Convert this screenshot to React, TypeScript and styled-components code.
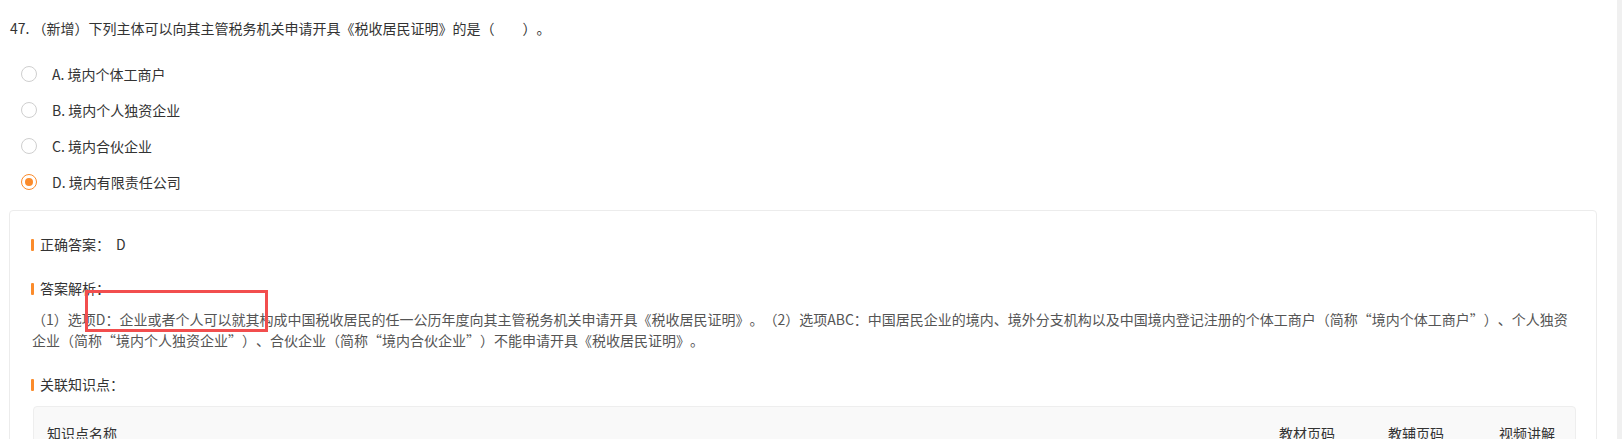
import styled, { createGlobalStyle } from "styled-components";

const GlobalStyle = createGlobalStyle`
  html, body {
    margin: 0;
    padding: 0;
    background: #ffffff;
  }
  body {
    font-family: "Noto Sans CJK SC", "Noto Sans", sans-serif;
    font-size: 14px;
    color: #333333;
    overflow: hidden;
    text-spacing-trim: space-all;
  }
`;

const ORANGE = "#fb8b2b";

const Layout = styled.div`
  display: flex;
  width: 1622px;
  height: 439px;
  overflow: hidden;
`;

const Main = styled.div`
  position: relative;
  flex: 1;
  padding: 18px 20px 0 9px;
`;

const SideStrip = styled.div`
  width: 5px;
  background: #f0f0f0;
`;

const Question = styled.div`
  line-height: 21px;
  padding-left: 1px;
  margin-bottom: 17px;
  white-space: pre;
`;

const Options = styled.div`
  display: flex;
  flex-direction: column;
  margin-bottom: 10px;
`;

const Option = styled.label`
  display: flex;
  align-items: center;
  height: 36px;
  padding-left: 12px;
  line-height: 21px;
  cursor: pointer;
`;

const Radio = styled.span<{ $checked?: boolean }>`
  box-sizing: border-box;
  width: 16px;
  height: 16px;
  border-radius: 50%;
  border: 1px solid ${(p) => (p.$checked ? ORANGE : "#cfcfcf")};
  margin-right: 15px;
  display: flex;
  align-items: center;
  justify-content: center;
  &::after {
    content: "";
    width: 8px;
    height: 8px;
    border-radius: 50%;
    background: ${ORANGE};
    display: ${(p) => (p.$checked ? "block" : "none")};
  }
`;

const Card = styled.div`
  box-sizing: border-box;
  border: 1px solid #ececec;
  border-radius: 4px;
  padding: 23px 20px 0 21px;
  height: 400px;
`;

const Section = styled.div`
  margin-bottom: 23px;
`;

const Title = styled.div<{ $gap?: number }>`
  display: flex;
  align-items: center;
  line-height: 21px;
  margin-bottom: ${(p) => p.$gap ?? 0}px;
  &::before {
    content: "";
    width: 3px;
    height: 12px;
    background: ${ORANGE};
    border-radius: 1px;
    margin-right: 6px;
  }
`;

const AnswerValue = styled.span`
  margin-left: 6px;
`;

const Analysis = styled.p`
  margin: 0;
  padding-left: 1px;
  line-height: 21px;
  color: #555555;
`;

const Table = styled.div`
  margin-left: 2px;
  border: 1px solid #eeeeee;
  border-radius: 4px;
  background: #f9f9f9;
`;

const HeaderRow = styled.div`
  display: grid;
  grid-template-columns: 1fr 109px 111px 56px;
  padding: 16px 20px 16px 13px;
  line-height: 21px;
  color: #333333;
`;

const Highlight = styled.div`
  position: absolute;
  left: 85px;
  top: 290px;
  width: 183px;
  height: 42px;
  box-sizing: border-box;
  border: 3px solid #f24e4e;
  pointer-events: none;
`;

const options = [
  { key: "A", text: "境内个体工商户" },
  { key: "B", text: "境内个人独资企业" },
  { key: "C", text: "境内合伙企业" },
  { key: "D", text: "境内有限责任公司" },
];

const App = () => {
  const selected = "D";
  return (
    <>
      <GlobalStyle />
      <Layout>
        <Main>
          <Question>
            47. （新增）下列主体可以向其主管税务机关申请开具《税收居民证明》的是（　　）。
          </Question>
          <Options>
            {options.map((o) => (
              <Option key={o.key}>
                <Radio $checked={o.key === selected} />
                {o.key}. {o.text}
              </Option>
            ))}
          </Options>
          <Card>
            <Section>
              <Title>
                正确答案：<AnswerValue>D</AnswerValue>
              </Title>
            </Section>
            <Section>
              <Title $gap={10}>答案解析：</Title>
              <Analysis>
                （1）选项D：企业或者个人可以就其构成中国税收居民的任一公历年度向其主管税务机关申请开具《税收居民证明》。（2）选项ABC：中国居民企业的境内、境外分支机构以及中国境内登记注册的个体工商户（简称“境内个体工商户”）、个人独资企业（简称“境内个人独资企业”）、合伙企业（简称“境内合伙企业”）不能申请开具《税收居民证明》。
              </Analysis>
            </Section>
            <Section>
              <Title $gap={11}>关联知识点：</Title>
              <Table>
                <HeaderRow>
                  <span>知识点名称</span>
                  <span>教材页码</span>
                  <span>教辅页码</span>
                  <span>视频讲解</span>
                </HeaderRow>
              </Table>
            </Section>
          </Card>
          <Highlight />
        </Main>
        <SideStrip />
      </Layout>
    </>
  );
};

export default App;
